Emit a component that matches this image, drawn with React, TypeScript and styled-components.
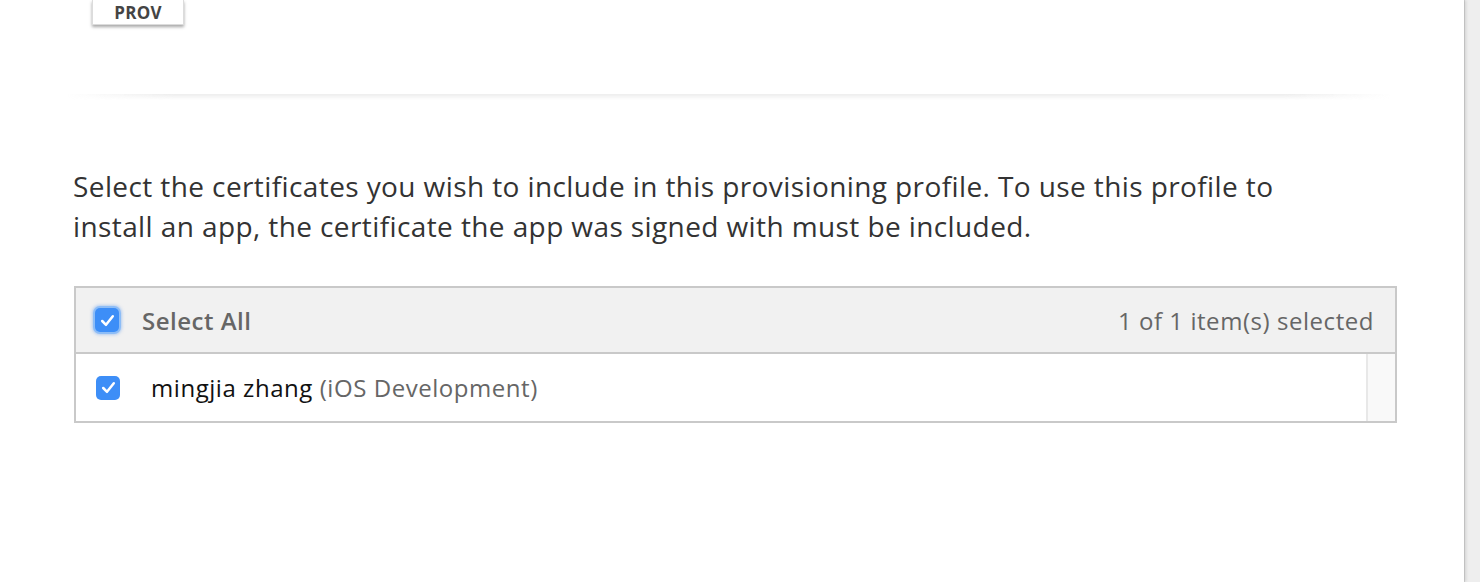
import React from "react";
import styled, { createGlobalStyle } from "styled-components";

const Global = createGlobalStyle`
  html, body { margin: 0; padding: 0; background: #eeeeee; }
  body { font-family: "Open Sans", "Liberation Sans", sans-serif; }
  * { box-sizing: border-box; }
`;

const Page = styled.div`
  display: flex;
  width: 1480px;
  height: 582px;
  overflow: hidden;
`;

const Main = styled.div`
  width: 1464px;
  height: 582px;
  background: #ffffff;
  box-shadow: 2px 0 3px rgba(0, 0, 0, 0.12);
  position: relative;
  z-index: 1;
  padding: 0 0 0 74px;
`;

const Side = styled.div`
  flex: 1;
  background: #eeeeee;
  border-left: 1px solid #d6d6d6;
`;

const TopBar = styled.div`
  height: 94px;
  padding-left: 18px;
`;

const TabButton = styled.div`
  width: 92px;
  height: 25px;
  background: #fff;
  border: 1px solid #dcdcdc;
  border-top: none;
  box-shadow: 0 2px 3px rgba(0, 0, 0, 0.35);
  display: flex;
  align-items: center;
  justify-content: center;
  font-size: 17px;
  font-weight: 700;
  color: #444;
  letter-spacing: 0.3px;
`;

const Divider = styled.div`
  margin-left: -6px;
  width: 1322px;
  height: 6px;
  background: linear-gradient(
    to right,
    rgba(255, 255, 255, 1) 0%,
    rgba(225, 225, 225, 0.6) 8%,
    rgba(225, 225, 225, 0.6) 92%,
    rgba(255, 255, 255, 1) 100%
  );
  -webkit-mask-image: linear-gradient(to bottom, rgba(0,0,0,1), rgba(0,0,0,0));
  mask-image: linear-gradient(to bottom, rgba(0,0,0,1), rgba(0,0,0,0));
`;

const Intro = styled.p`
  margin: 66px 0 0 -1px;
  width: 1230px;
  font-size: 28px;
  line-height: 40px;
  color: #333;
  letter-spacing: 0.4px;
`;

const Table = styled.div`
  margin-top: 40px;
  width: 1323px;
  border: 2px solid #c9c9c9;
`;

const Header = styled.div`
  height: 66px;
  background: #f1f1f1;
  border-bottom: 2px solid #c9c9c9;
  display: flex;
  align-items: center;
  padding: 0 21px 0 19px;
`;

const HeaderLabel = styled.span`
  margin-left: 23px;
  font-size: 24px;
  font-weight: 600;
  color: #666;
  flex: 1;
  letter-spacing: 0.5px;
`;

const Count = styled.span`
  font-size: 24px;
  color: #666;
  letter-spacing: 0.55px;
`;

const Row = styled.div`
  height: 67px;
  display: flex;
  align-items: center;
`;

const RowMain = styled.div`
  flex: 1;
  display: flex;
  align-items: center;
  padding-left: 20px;
`;

const Gutter = styled.div`
  width: 29px;
  align-self: stretch;
  background: #f9f9f9;
  border-left: 2px solid #e8e8e8;
`;

const Name = styled.span`
  margin-left: 31px;
  font-size: 24px;
  color: #111;
  letter-spacing: 0.55px;
`;

const Kind = styled.span`
  color: #666;
`;

const Box = styled.span<{ $focus?: boolean }>`
  width: 24px;
  height: 24px;
  border-radius: 5px;
  background: #3d8ef7;
  display: inline-flex;
  align-items: center;
  justify-content: center;
  flex-shrink: 0;
  box-shadow: ${(p) => (p.$focus ? "0 0 0 2px #8dbdf7, 0 0 3px 3px rgba(120,170,240,0.5)" : "none")};
`;

const Check = () => (
  <svg width="15" height="13" viewBox="0 0 15 13">
    <path d="M2.2 7 L6 10.8 L12.8 2.2" fill="none" stroke="#fff" strokeWidth="2.5" strokeLinecap="round" strokeLinejoin="round" />
  </svg>
);

export default function App() {
  return (
    <>
      <Global />
      <Page>
        <Main>
          <TopBar>
            <TabButton>PROV</TabButton>
          </TopBar>
          <Divider />
          <Intro>
            Select the certificates you wish to include in this provisioning profile. To use this profile to
            install an app, the certificate the app was signed with must be included.
          </Intro>
          <Table>
            <Header>
              <Box $focus>
                <Check />
              </Box>
              <HeaderLabel>Select All</HeaderLabel>
              <Count>1 of 1 item(s) selected</Count>
            </Header>
            <Row>
              <RowMain>
                <Box>
                  <Check />
                </Box>
                <Name>
                  mingjia zhang <Kind>(iOS Development)</Kind>
                </Name>
              </RowMain>
              <Gutter />
            </Row>
          </Table>
        </Main>
        <Side />
      </Page>
    </>
  );
}
